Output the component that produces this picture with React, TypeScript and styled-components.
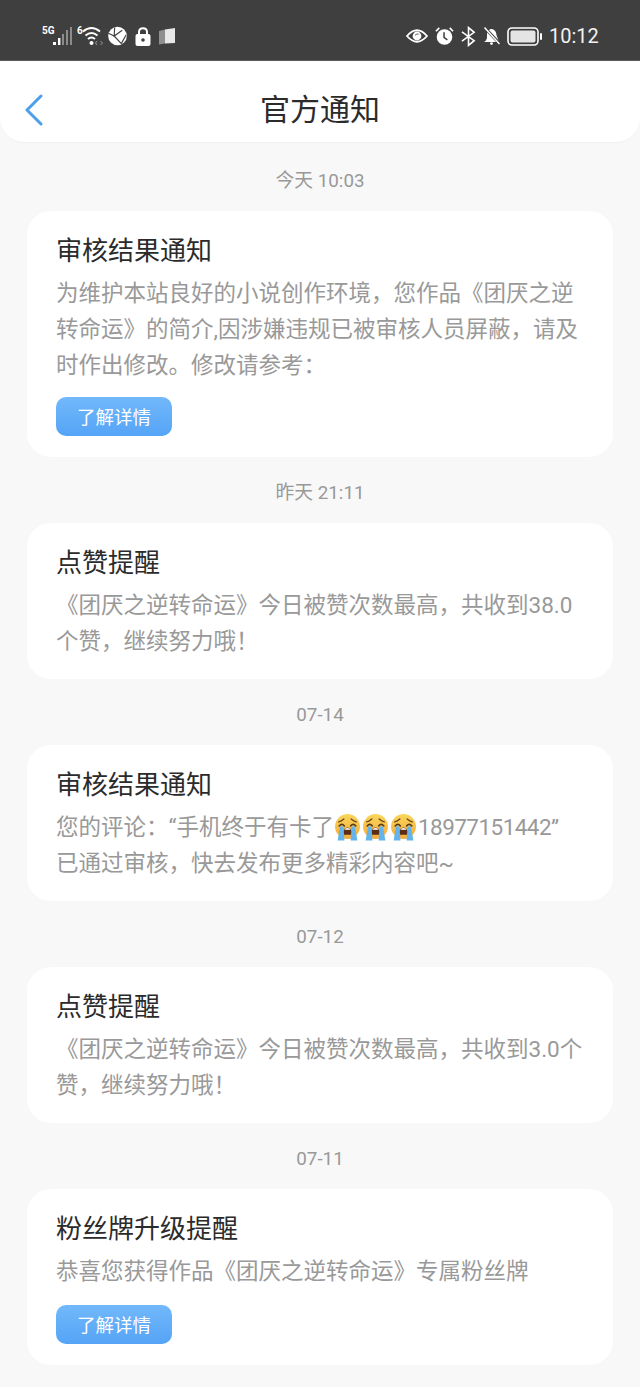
import styled, { createGlobalStyle } from 'styled-components';

const GlobalStyle = createGlobalStyle`
  html, body {
    margin: 0;
    padding: 0;
    background: #f8f8f8;
  }
  * {
    box-sizing: border-box;
  }
`;

const notices = [
  {
    date: '今天 10:03',
    title: '审核结果通知',
    body: '为维护本站良好的小说创作环境，您作品《团厌之逆转命运》的简介,因涉嫌违规已被审核人员屏蔽，请及时作出修改。修改请参考：',
    actionGap: 14,
  },
  {
    date: '昨天 21:11',
    title: '点赞提醒',
    body: '《团厌之逆转命运》今日被赞次数最高，共收到38.0个赞，继续努力哦！',
  },
  {
    date: '07-14',
    title: '审核结果通知',
    emoji: true,
  },
  {
    date: '07-12',
    title: '点赞提醒',
    body: '《团厌之逆转命运》今日被赞次数最高，共收到3.0个赞，继续努力哦！',
  },
  {
    date: '07-11',
    title: '粉丝牌升级提醒',
    body: '恭喜您获得作品《团厌之逆转命运》专属粉丝牌',
    actionGap: 16,
  },
];

function CryingFace() {
  return (
    <EmojiSvg viewBox="0 0 24 26">
      <defs>
        <linearGradient id="faceFill" x1="0" y1="0" x2="0" y2="1">
          <stop offset="0" stopColor="#fbd65a" />
          <stop offset="1" stopColor="#f3a93c" />
        </linearGradient>
      </defs>
      <circle cx="12" cy="12" r="12" fill="url(#faceFill)" />
      <path d="M3.5 7.5 Q6 7 8.5 4.8 M20.5 7.5 Q18 7 15.5 4.8" stroke="#6b4a1e" strokeWidth="1.3" fill="none" strokeLinecap="round" />
      <path d="M4 11.5 Q6.5 8.5 9 11.5 M15 11.5 Q17.5 8.5 20 11.5" stroke="#5a3d18" strokeWidth="1.6" fill="none" strokeLinecap="round" />
      <path d="M7.5 20 Q7.5 13 12 13 Q16.5 13 16.5 20 Z" fill="#5a2e14" />
      <path d="M9.2 15.2 H14.8 V14.4 Q12 12.8 9.2 14.4 Z" fill="#fff" />
      <path d="M4.8 12 H8.2 L9 25.5 H2.5 Z" fill="#62b4ea" />
      <path d="M15.8 12 H19.2 L21.5 25.5 H15 Z" fill="#62b4ea" />
    </EmojiSvg>
  );
}

function SignalIcon() {
  return (
    <svg width="30" height="20" viewBox="0 0 30 20">
      <text x="0" y="8" fontFamily="Roboto, sans-serif" fontSize="10" fontWeight="700" fill="#fff">5G</text>
      <rect x="11" y="16" width="3" height="3" fill="#fff" />
      <rect x="16" y="12" width="2.4" height="7" fill="#fff" />
      <rect x="20" y="8" width="2" height="11" fill="#8c8c8c" />
      <rect x="24" y="4" width="2" height="15" fill="#8c8c8c" />
      <rect x="28" y="1" width="2" height="18" fill="#8c8c8c" />
    </svg>
  );
}

function WifiIcon() {
  return (
    <svg width="26" height="20" viewBox="0 0 26 20" fill="none">
      <text x="0" y="8" fontFamily="Roboto, sans-serif" fontSize="10" fontWeight="700" fill="#fff">6</text>
      <path d="M6 5.5 Q14.5 -1.5 23 5.5" stroke="#fff" strokeWidth="2" />
      <path d="M8.5 9.5 Q14.5 4.5 20.5 9.5" stroke="#fff" strokeWidth="2" />
      <path d="M11 13 Q14.5 10 18 13" stroke="#fff" strokeWidth="2" />
      <circle cx="14.5" cy="17" r="2" fill="#fff" />
      <path d="M20 15 L18.5 17 L20 19 M23.5 15 L25.5 17 L23.5 19" stroke="#999" strokeWidth="1" />
    </svg>
  );
}

function GlobeIcon() {
  return (
    <svg width="19" height="20" viewBox="0 0 20 20" fill="none">
      <circle cx="10" cy="10" r="9.8" fill="#fff" />
      <path d="M7 1 L6.5 10 L15 4 M6.5 10 L14 18 M6.5 10 L0.5 7 M14 18 L19 9" stroke="#3f3f3f" strokeWidth="1.2" />
    </svg>
  );
}

function LockIcon() {
  return (
    <svg width="16" height="19" viewBox="0 0 16 19" fill="none">
      <path d="M4 8 V5 Q4 1.2 8 1.2 Q12 1.2 12 5 V8" stroke="#fff" strokeWidth="2" />
      <rect x="0.5" y="7" width="15" height="12" rx="2" fill="#fff" />
      <circle cx="8" cy="13" r="1.8" fill="#3f3f3f" />
    </svg>
  );
}

function BookIcon() {
  return (
    <svg width="16" height="17" viewBox="0 0 16 17">
      <path d="M0 3 L6 1.5 V15.5 L0 16.5 Z" fill="#8f8f8f" />
      <path d="M6 1.5 L16 0 V15 L6 15.5 Z" fill="#e8e8e8" />
    </svg>
  );
}

function EyeIcon() {
  return (
    <svg width="22" height="16" viewBox="0 0 22 16" fill="none">
      <path d="M1 8 Q11 -3.5 21 8 Q11 19.5 1 8 Z" stroke="#fff" strokeWidth="1.8" />
      <circle cx="11" cy="8" r="4.4" fill="#fff" />
      <path d="M8.8 8 A2.6 2.6 0 0 1 13.4 6.6 A4 4 0 0 0 8.8 8 Z" fill="#3f3f3f" />
    </svg>
  );
}

function AlarmIcon() {
  return (
    <svg width="19" height="20" viewBox="0 0 20 20" fill="none">
      <circle cx="10" cy="11" r="8.2" fill="#fff" />
      <path d="M1 5 L4.5 1.5 M19 5 L15.5 1.5" stroke="#fff" strokeWidth="1.8" />
      <path d="M9.5 6 V11.5 L13 14" stroke="#3f3f3f" strokeWidth="1.6" />
    </svg>
  );
}

function BluetoothIcon() {
  return (
    <svg width="15" height="21" viewBox="0 0 16 21" fill="none">
      <path d="M1 5.5 L14 15 L8 20 V1 L14 6 L1 15.5" stroke="#fff" strokeWidth="1.7" />
    </svg>
  );
}

function BellOffIcon() {
  return (
    <svg width="17" height="18" viewBox="0 0 17 18" fill="none">
      <path d="M3 13.5 L4 11 V7 Q4 3 8 2 H9 Q13 3 13.5 8 L16 15 H1 Z" fill="#fff" />
      <circle cx="8.5" cy="16.6" r="1.4" fill="#fff" />
      <path d="M2 1 L16 16" stroke="#3f3f3f" strokeWidth="3" />
      <path d="M1.5 0.5 L16.5 17" stroke="#fff" strokeWidth="1.5" />
    </svg>
  );
}

function BatteryIcon() {
  return (
    <svg width="35" height="19" viewBox="0 0 35 19" fill="none">
      <rect x="1" y="1" width="30" height="17" rx="4" stroke="#fff" strokeWidth="1.6" />
      <rect x="3.5" y="3.5" width="25" height="12" rx="2" fill="#e4e4e4" />
      <rect x="33" y="6" width="2" height="7" rx="1" fill="#fff" />
    </svg>
  );
}

export default function App() {
  return (
    <Page lang="zh-CN">
      <GlobalStyle />
      <StatusBar>
        <StatusGroup $gap={8}>
          <StatusGroup $gap={5}>
            <SignalIcon />
            <WifiIcon />
            <GlobeIcon />
          </StatusGroup>
          <LockIcon />
          <BookIcon />
        </StatusGroup>
        <StatusGroup $gap={7}>
          <EyeIcon />
          <AlarmIcon />
          <BluetoothIcon />
          <BellOffIcon />
          <BatteryIcon />
          <Clock>10:12</Clock>
        </StatusGroup>
      </StatusBar>
      <Header>
        <BackButton aria-label="返回">
          <svg width="20" height="32" viewBox="0 0 20 32" fill="none">
            <path d="M17 2 L3 16 L17 30" stroke="#4d9fe9" strokeWidth="3" strokeLinecap="round" strokeLinejoin="round" />
          </svg>
        </BackButton>
        <HeaderTitle>官方通知</HeaderTitle>
      </Header>
      <NoticeList>
        {notices.map((notice) => (
          <li key={notice.date}>
            <DateLabel>{notice.date}</DateLabel>
            <Card>
              <CardTitle>{notice.title}</CardTitle>
              <CardBody>
                {notice.emoji ? (
                  <>
                    您的评论：“手机终于有卡了
                    <CryingFace />
                    <CryingFace />
                    <CryingFace />
                    <PhoneNumber>18977151442</PhoneNumber>”
                    <br />
                    已通过审核，快去发布更多精彩内容吧~
                  </>
                ) : (
                  notice.body
                )}
              </CardBody>
              {notice.actionGap && <DetailButton $gap={notice.actionGap}>了解详情</DetailButton>}
            </Card>
          </li>
        ))}
      </NoticeList>
    </Page>
  );
}

const Page = styled.div`
  width: 640px;
  height: 1387px;
  overflow: hidden;
  background: #f8f8f8;
  font-family: Roboto, 'Noto Sans CJK SC', sans-serif;
`;

const StatusBar = styled.div`
  height: 61px;
  padding: 12px 42px 0;
  background: #3f3f3f;
  border-bottom: 1px solid #5c5c5c;
  display: flex;
  align-items: center;
  justify-content: space-between;
`;

const StatusGroup = styled.div<{ $gap: number }>`
  display: flex;
  align-items: center;
  gap: ${(p) => p.$gap}px;
`;

const Clock = styled.span`
  width: 49px;
  color: #f2f2f2;
  font-size: 20px;
  line-height: 26px;
  white-space: nowrap;
`;

const Header = styled.header`
  height: 81px;
  padding: 16px 24px 0;
  background: #fff;
  border-radius: 0 0 24px 24px;
  box-shadow: 0 1px 1px #f0f0f0;
  display: grid;
  grid-template-columns: 1fr auto 1fr;
  align-items: center;
`;

const BackButton = styled.button`
  width: 20px;
  height: 32px;
  padding: 0;
  border: none;
  background: none;
  display: flex;
`;

const HeaderTitle = styled.h1`
  margin: 0;
  color: #2b2b2b;
  font-size: 30px;
  font-weight: 400;
  line-height: 40px;
`;

const NoticeList = styled.ul`
  list-style: none;
  margin: 0;
  padding: 3px 27px 0;
`;

const DateLabel = styled.div`
  height: 66px;
  padding-top: 23px;
  color: #999;
  font-size: 18.8px;
  line-height: 26px;
  text-align: center;
`;

const Card = styled.div`
  padding: 22px 29px 20px;
  background: #fff;
  border-radius: 24px;
`;

const CardTitle = styled.h2`
  margin: 0 0 6px;
  color: #2b2b2b;
  font-size: 26px;
  font-weight: 400;
  line-height: 36px;
`;

const CardBody = styled.p`
  margin: 0;
  color: #999;
  font-size: 22.5px;
  line-height: 36px;
`;

const PhoneNumber = styled.span`
  letter-spacing: -0.55px;
`;

const EmojiSvg = styled.svg`
  width: 25px;
  height: 27px;
  margin: 0 1.5px;
  vertical-align: -6px;
`;

const DetailButton = styled.button<{ $gap: number }>`
  display: block;
  width: 116px;
  height: 39px;
  margin: ${(p) => p.$gap}px 0 1px;
  padding: 0 0 2px;
  border: none;
  border-radius: 10px;
  background: linear-gradient(#72b8fb, #55a4f6);
  color: #fff;
  font-family: inherit;
  font-size: 18.5px;
`;
